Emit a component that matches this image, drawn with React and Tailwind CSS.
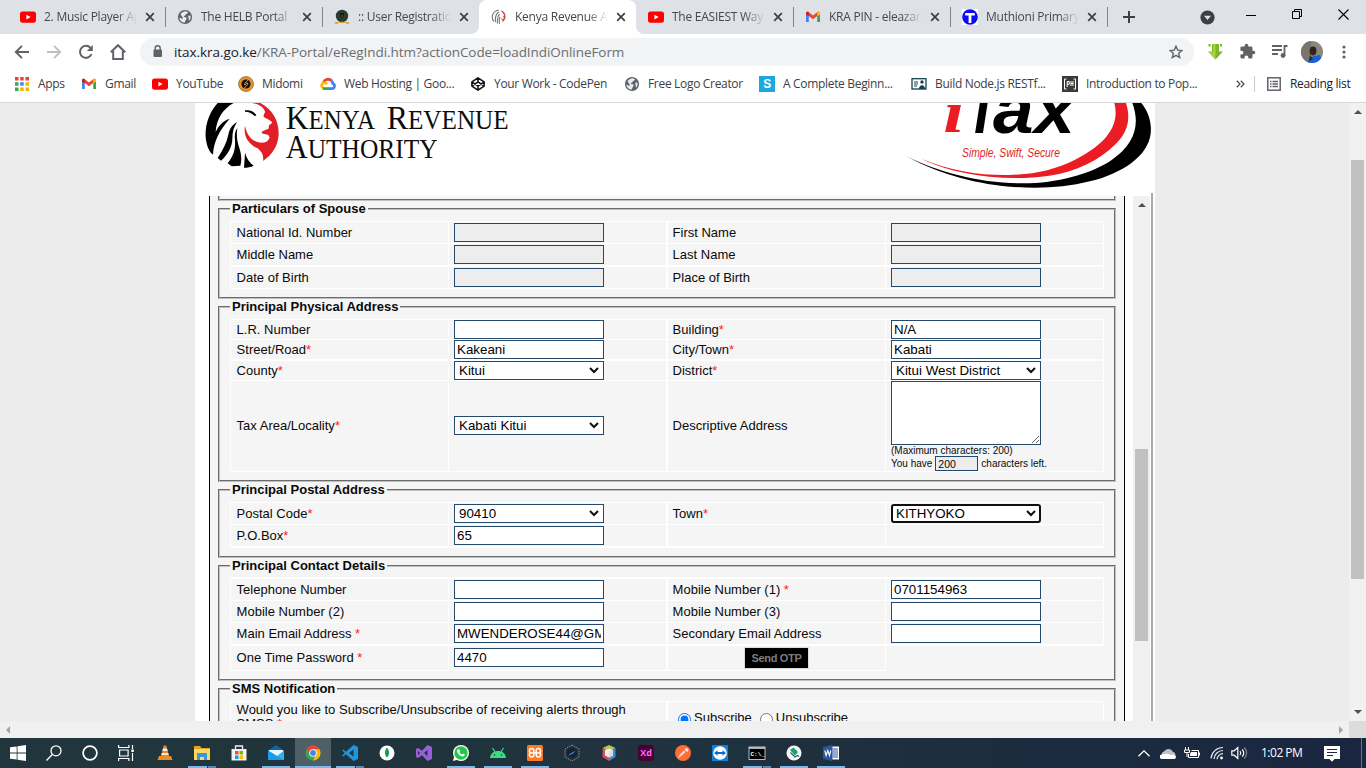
import React from "react";

const ui = "font-['Open_Sans','Noto_Sans',sans-serif]";

/* ---------- small icons ---------- */
const YouTube = () => (
  <svg width="16" height="16" viewBox="0 0 16 16">
    <rect x="0" y="2.5" width="16" height="11.2" rx="2.6" fill="#f00" />
    <path d="M6.4 5.7v4.8L10.6 8.1z" fill="#fff" />
  </svg>
);
const Gmail = () => (
  <svg width="16" height="16" viewBox="0 0 16 16">
    <path d="M1 4v9h2.8V6.5z" fill="#4285f4" />
    <path d="M15 4v9h-2.8V6.5z" fill="#34a853" />
    <path d="M1 4.3C1 2.9 2.6 2.4 3.8 3.2L8 6.4l4.2-3.2C13.4 2.4 15 2.9 15 4.3L12.2 7 8 10.2 3.8 7z" fill="#ea4335" />
    <path d="M12.2 3.2C13.4 2.4 15 2.9 15 4.3v1.1L12.2 7.5z" fill="#fbbc04" />
    <path d="M3.8 3.2C2.6 2.4 1 2.9 1 4.3v1.1l2.8 2.1z" fill="#c5221f" />
  </svg>
);
const Globe = () => (
  <svg width="16" height="16" viewBox="0 0 16 16">
    <circle cx="8" cy="8" r="7.1" fill="#5f6368" />
    <path d="M8.6 2.2 10.8 3c.3 1.3-.6 1.6-1.6 2-.9.4-.4 1.5-1.6 1.7C6.2 7 6.8 8.3 8.3 8.2c1.4-.1 1.5.7 1.3 1.6-.2.9-1 1-1.2 2-.2.9-.6 1.7-1.3 1.9C4.3 13.2 2.4 10.9 2.3 8.5l2.5 1.3c.9.3 1.3-.4.8-1.2L3.5 5.3C4.5 3.5 6.5 2.2 8.6 2.2zM12 6.6c.9-.3 1.4.1 1.6.7.2 1.5-.4 3.2-1.4 4.3-.7-.6-.3-1.6-.5-2.4-.2-.9-1-2 .3-2.6z" fill="#e8eaed" />
  </svg>
);
const Crest = () => (
  <svg width="16" height="16" viewBox="0 0 16 16">
    <circle cx="8" cy="7" r="6.2" fill="#2c3440" />
    <circle cx="8" cy="6.8" r="4.3" fill="#174b1f" />
    <path d="M6.2 4h3.5v3.5L8 9.5 6.200 7.5z" fill="#0c0c0c" />
    <path d="M7.300 5.500h1.500v3H7.300z" fill="#b3262a" />
    <path d="M.5 14.500c1-3 3-.5 7.500-2 4.500 1.500 6.500-1 7.500 2l-2.500.5-2-1.500-3 .8-3-.8-2 1.500z" fill="#d8a62a" />
  </svg>
);
const LionMini = () => (
  <svg width="16" height="16" viewBox="0 0 16 16" fill="none">
    <path d="M8 1.200A6.800 6.800 0 0 0 3 12.500M8 3C5 4.500 4 8 4.500 13M8.500 5C6.500 7 6 10 6.500 14.500M9 8c-1 2-1 4-.5 6.800" stroke="#777" strokeWidth="1.100" />
    <path d="M9.500 1.300c4.500 1 6 5.500 4.500 9l-2.500 3.200v-2l-2-2.200 2.500 1 1-1.500-1-1 1.200-1.500-2-3z" fill="#d8434a" />
  </svg>
);
const TIcon = () => (
  <svg width="16" height="16" viewBox="0 0 16 16">
    <rect width="16" height="16" fill="#fff" />
    <circle cx="8" cy="8" r="7.800" fill="#0b0bf5" />
    <path d="M3.200 4h9.600v2.600H9.400V14H6.600V6.600H3.200z" fill="#fff" />
  </svg>
);
const Close = () => (
  <svg width="10" height="10" viewBox="0 0 10 10" stroke="#3c4043" strokeWidth="1.700">
    <path d="M1.200 1.200l7.600 7.600M8.800 1.200L1.200 8.800" />
  </svg>
);

const tabs = [
  { Icon: YouTube, title: "2. Music Player App" },
  { Icon: Globe, title: "The HELB Portal", sep: true },
  { Icon: Crest, title: ":: User Registration", sep: true },
  { Icon: LionMini, title: "Kenya Revenue Aut", active: true },
  { Icon: YouTube, title: "The EASIEST Way to" },
  { Icon: Gmail, title: "KRA PIN - eleazarm", sep: true },
  { Icon: TIcon, title: "Muthioni Primary S", sep: true },
];

function Tab({ Icon, title, active, sep }) {
  return (
    <div className={"relative flex h-[34px] w-[157px] shrink-0 items-center " + (active ? "rounded-t-lg bg-white" : "")}>
      {sep && <span className="absolute top-[7px] left-0 h-[20px] w-px bg-[#80868b]" />}
      {active && (
        <>
          <svg className="absolute bottom-0 left-[-8px]" width="8" height="8" fill="#fff"><path d="M8 0v8H0A8 8 0 0 0 8 0z" /></svg>
          <svg className="absolute right-[-8px] bottom-0" width="8" height="8" fill="#fff"><path d="M0 0v8h8A8 8 0 0 1 0 0z" /></svg>
        </>
      )}
      <span className="ml-3 w-4"><Icon /></span>
      <span className="ml-2 w-[93px] overflow-hidden text-[12px] tracking-[-0.25px] whitespace-nowrap text-[#45494d] [mask-image:linear-gradient(to_right,black_78%,transparent)]">{title}</span>
      <span className="ml-[8px]"><Close /></span>
    </div>
  );
}

function TabStrip() {
  return (
    <div className="flex h-[34px] bg-[#dee1e6] pl-2">
      {tabs.map((t) => <Tab key={t.title} {...t} />)}
      <div className="relative flex w-[259px] items-center">
        <span className="absolute top-[7px] left-0 h-[20px] w-px bg-[#80868b]" />
        <svg className="ml-4" width="12" height="12" viewBox="0 0 12 12" stroke="#3c4043" strokeWidth="2"><path d="M6 0v12M0 6h12" /></svg>
        <svg className="ml-[65px]" width="15" height="15" viewBox="0 0 15 15"><circle cx="7.500" cy="7.500" r="7.100" fill="#3c4043" /><path d="M4 5.800h7L7.500 10z" fill="#dee1e6" /></svg>
        <svg className="mb-[5px] ml-[31px]" width="10" height="10" stroke="#000"><path d="M0 5.500h10" /></svg>
        <svg className="mb-[6px] ml-[36px]" width="10" height="10" fill="none" stroke="#000"><path d="M.5 2.500h7v7h-7zM2.500 2.500v-2h7v7h-2" /></svg>
        <svg className="mb-[6px] ml-[36px] shrink-0" width="11" height="11" stroke="#000" strokeWidth="1.100"><path d="M.5 .5l10 10M10.500 .5l-10 10" /></svg>
      </div>
    </div>
  );
}

function Toolbar() {
  return (
    <div className="flex h-[35px] items-center bg-white">
      <svg className="ml-[14px]" width="16" height="16" viewBox="0 0 16 16" fill="none" stroke="#5f6368" strokeWidth="1.900"><path d="M15 8H2M8 1.800L1.800 8 8 14.200" /></svg>
      <svg className="ml-4" width="16" height="16" viewBox="0 0 16 16" fill="none" stroke="#bdc1c6" strokeWidth="1.900"><path d="M1 8h13M8 1.800L14.200 8 8 14.200" /></svg>
      <svg className="ml-4" width="16" height="16" viewBox="0 0 16 16" fill="none" stroke="#5f6368" strokeWidth="2"><path d="M13.500 10.200A6 6 0 1 1 12.400 3.800" /><path d="M14.800 1v6H8.800z" fill="#5f6368" stroke="none" /></svg>
      <svg className="ml-[15px]" width="18" height="18" viewBox="0 0 18 18" fill="none" stroke="#5f6368" strokeWidth="2"><path d="M1.800 9.300L9 2.200l7.200 7.100M4.200 8v8h9.600V8" /></svg>
      <div className="ml-[13px] flex h-7 w-[1054px] items-center rounded-full bg-[#f1f3f4]">
        <svg className="ml-[13px]" width="10" height="13" viewBox="0 0 10 13"><rect x="0.500" y="4.500" width="8.500" height="7.500" rx="1" fill="#5f6368" /><path d="M2.200 5V3.200a2.500 2.500 0 0 1 5 0V5" fill="none" stroke="#5f6368" strokeWidth="1.400" /></svg>
        <span className="mt-[2px] ml-[11px] text-[13.500px] tracking-[-0.06px] whitespace-nowrap text-[#6a6e73]"><span className="text-[#202124]">itax.kra.go.ke</span>/KRA-Portal/eRegIndi.htm?actionCode=loadIndiOnlineForm</span>
        <svg className="mr-[11px] ml-auto" width="14" height="14" viewBox="0 0 14 14" fill="none" stroke="#5f6368" strokeWidth="1.400"><path d="M7 1.200l1.700 3.900 4.200.4-3.200 2.800 1 4.200L7 10.300l-3.700 2.200 1-4.200L1.100 5.500l4.200-.4z" /></svg>
      </div>
      <svg className="ml-[13px]" width="17" height="17" viewBox="0 0 17 17"><path d="M1.500 1h2v2.500h-2zM13 1h2v2.500h-2zM5 1h7v7.500h4L8.500 16.500 1 8.500h4z" fill="#7db52b" /><path d="M6 1h2.500v15L2 9h4z" fill="#a3d33c" /></svg>
      <svg className="ml-[15px]" width="17" height="17" viewBox="0 0 24 24" fill="#5f6368"><path d="M20.500 11H19V7a2 2 0 0 0-2-2h-4V3.500a2.500 2.500 0 0 0-5 0V5H4a2 2 0 0 0-2 2v3.800h1.500a2.700 2.700 0 0 1 0 5.400H2V20a2 2 0 0 0 2 2h3.800v-1.500a2.700 2.700 0 0 1 5.400 0V22H17a2 2 0 0 0 2-2v-4h1.500a2.500 2.500 0 0 0 0-5z" /></svg>
      <svg className="ml-[15px]" width="17" height="15" viewBox="0 0 17 15"><path d="M1 2h10M1 6h10M1 10h6" stroke="#5f6368" strokeWidth="1.800" /><path d="M13.500 12V2h3" stroke="#5f6368" strokeWidth="1.800" fill="none" /><circle cx="12" cy="11.500" r="2.400" fill="#5f6368" /></svg>
      <svg className="ml-[13px]" width="22" height="22" viewBox="0 0 22 22"><defs><clipPath id="av"><circle cx="11" cy="11" r="11" /></clipPath></defs><g clipPath="url(#av)"><rect width="22" height="22" fill="#8c887e" /><path d="M0 0h10v22H0z" fill="#77756d" /><ellipse cx="12" cy="10" rx="3.400" ry="4.400" fill="#33211c" /><path d="M7 22c0-4 2-6 6-7l6-1 3 8z" fill="#1763d6" /><path d="M9 14l3 4-4 2z" fill="#3a241d" /></g></svg>
      <svg className="ml-[19px]" width="4" height="14" fill="#5f6368"><circle cx="2" cy="2" r="1.600" /><circle cx="2" cy="7" r="1.600" /><circle cx="2" cy="12" r="1.600" /></svg>
    </div>
  );
}

const AppsIcon = () => (
  <svg width="14" height="14" viewBox="0 0 14 14">
    <path d="M0 0h3.500v3.500H0zM5.200 0h3.500v3.500H5.200zM10.500 0H14v3.500h-3.500z" fill="#ea4335" />
    <path d="M0 5.200h3.500v3.500H0zM0 10.500h3.500V14H0z" fill="#34a853" /><path d="M5.200 5.200h3.500v3.500H5.200z" fill="#4285f4" />
    <path d="M10.500 5.200H14v3.500h-3.500zM5.200 10.500h3.500V14H5.200zM10.500 10.500H14V14h-3.500z" fill="#f5b400" />
  </svg>
);
const Midomi = () => (
  <svg width="16" height="16" viewBox="0 0 16 16"><circle cx="8" cy="8" r="7.500" fill="#e8922a" stroke="#6b4a22" strokeWidth=".6" /><circle cx="8" cy="8" r="4.600" fill="#171310" /><path d="M9.800 4.200L6.600 7.500v1.400l3-2v1.600L6.400 12" stroke="#e8922a" strokeWidth="1" fill="none" /></svg>
);
const Cloud = () => (
  <svg width="16" height="16" viewBox="0 0 16 16" fill="none" strokeWidth="2.800"><path d="M3.600 6.500A4.700 4.700 0 0 1 11.500 4.800" stroke="#ea4335" /><path d="M11.300 4.500c1 .8 1.200 1.700 1.300 2.800a2.800 2.800 0 0 1 0 5.300H8" stroke="#4285f4" /><path d="M8.500 12.600H4.500l-2-.6" stroke="#34a853" /><path d="M3 12a2.800 2.800 0 0 1 1.500-5.200c1.200 0 2 .5 2.600 1.300" stroke="#fbbc04" /></svg>
);
const CodePen = () => (
  <svg width="14" height="14" viewBox="0 0 24 24" fill="none" stroke="#111" strokeWidth="2.600" strokeLinejoin="round"><path d="M12 1.500L22.500 8.500v7L12 22.500 1.500 15.500v-7zM12 1.500v7M12 22.500v-7M22.500 8.500L12 15.500 1.500 8.500M1.500 15.500L12 8.500l10.500 7" /></svg>
);
const SIcon = () => <span className="flex h-4 w-4 items-center justify-center bg-[#1ba8dc] font-['Liberation_Sans',sans-serif] text-[12px] font-bold text-white">S</span>;
const CardIcon = () => (
  <svg width="16" height="12" viewBox="0 0 16 12"><rect x="1" y=".7" width="14" height="10.300" fill="#fff" stroke="#17404f" strokeWidth="1.300" /><path d="M3 4h4M3 6h4M3 8h3" stroke="#17404f" /><circle cx="11" cy="4" r="1.700" fill="#17404f" /><path d="M8 11c0-5 6-5 6 0z" fill="#17404f" /></svg>
);
const PhIcon = () => (
  <svg width="16" height="16" viewBox="0 0 16 16"><rect width="16" height="16" fill="#3a3a3a" /><path d="M4.500 3H2.500v10h2M11.500 3h2v10h-2M5.200 11V5.500h2v2.800h-2M9 5v5M11 5v5M9 7.500h2" stroke="#fff" fill="none" /></svg>
);

const bookmarks = [
  { Icon: AppsIcon, text: "Apps", cls: "w-[66px]", gap: "ml-[9px]" },
  { Icon: Gmail, text: "Gmail", cls: "w-[71px]", gap: "ml-[8px]" },
  { Icon: YouTube, text: "YouTube", cls: "w-[86px]", gap: "ml-[8px]" },
  { Icon: Midomi, text: "Midomi", cls: "w-[82px]", gap: "ml-[8px]" },
  { Icon: Cloud, text: "Web Hosting | Goo...", cls: "w-[151px]", gap: "ml-[8px]" },
  { Icon: CodePen, text: "Your Work - CodePen", cls: "w-[153px]", gap: "ml-[9px]" },
  { Icon: Globe, text: "Free Logo Creator", cls: "w-[135px]", gap: "ml-[8px]" },
  { Icon: SIcon, text: "A Complete Beginn...", cls: "w-[152px]", gap: "ml-[8px]" },
  { Icon: CardIcon, text: "Build Node.js RESTf...", cls: "w-[151px]", gap: "ml-[8px]" },
  { Icon: PhIcon, text: "Introduction to Pop...", cls: "w-[172px]", gap: "ml-[8px]" },
];

function Bookmarks() {
  return (
    <div className="flex h-[34px] items-center border-b border-[#d5d7da] bg-white pb-1 pl-[15px] text-[12px] tracking-[-0.32px] text-[#3c4043]">
      {bookmarks.map(({ Icon, text, cls, gap }) => (
        <div key={text} className={"flex shrink-0 items-center whitespace-nowrap " + cls}>
          <Icon />
          <span className={"mt-px " + gap}>{text}</span>
        </div>
      ))}
      <svg className="ml-[2px]" width="9" height="8" fill="none" stroke="#4a4d51" strokeWidth="1.300"><path d="M.8 .8L4 4 .8 7.200M4.800 .8L8 4 4.800 7.200" /></svg>
      <span className="ml-[9px] h-4 w-px bg-[#c9ccd0]" />
      <svg className="ml-[12px]" width="14" height="14" viewBox="0 0 14 14" fill="none" stroke="#5f6368"><rect x=".8" y=".8" width="12.400" height="12.400" strokeWidth="1.500" /><path d="M3 4.500h1.500M5.500 4.500H11M3 7h1.500M5.500 7H11M3 9.500h1.500M5.500 9.500H11" strokeWidth="1.300" /></svg>
      <span className="mt-px ml-[9px] whitespace-nowrap text-[#202124]">Reading list</span>
    </div>
  );
}

/* ---------- site header ---------- */
function KraLogo() {
  return (
    <svg width="330" height="93" viewBox="0 9 990 279">
      <path d="M68 9C38 42 28 84 33 120c4 24 12 38 21 44 2-38 18-72 50-108-22 8-34 22-42 40 2-38 22-70 54-87z" fill="#000" />
      <path d="M126 66c-16 10-23 22-26 38-5 24-17 46-32 70l10 8c22-20 34-44 34-66 0-20 4-34 14-50z" fill="#000" />
      <path d="M127 84c-8 12-8 22-7 36 2 26-4 48-22 70l12 9 26-2c6-20 2-38-4-56-6-20-8-34-5-57z" fill="#000" />
      <path d="M150 158c4 16 14 30 26 39-9 4-19 6-29 6z" fill="#000" />
      <path d="M150 31c14-2 26 2 34 14l-4 4c-8-9-18-14-30-14z" fill="#000" />
      <path d="M172 9h24c36 18 56 54 55 94-2 36-20 62-47 80 3-18-4-28-16-38-24-10-44-32-38-68 5 26 18 44 40 50 14 4 28 0 34-14l-4-8c-6-4-18-2-20-7 2-8 12-7 20-12 4-4-2-6 4-12l8-6c-6-10-20-12-26-18-2-10 8-10 2-20-6-12-20-18-36-21z" fill="#e21f26" />
      <g fill="#0d0d0d" className="font-['Liberation_Serif',serif]">
        <text x="272" y="88" textLength="268" lengthAdjust="spacingAndGlyphs" fontSize="82"><tspan fontSize="104">K</tspan>ENYA</text>
        <text x="575" y="88" textLength="366" lengthAdjust="spacingAndGlyphs" fontSize="82"><tspan fontSize="104">R</tspan>EVENUE</text>
        <text x="272" y="174" textLength="456" lengthAdjust="spacingAndGlyphs" fontSize="82"><tspan fontSize="98">A</tspan>UTHORITY</text>
      </g>
    </svg>
  );
}
function ITaxLogo() {
  return (
    <svg width="265" height="93" viewBox="0 9 795 279">
      <path d="M48 168C150 218 270 250 400 250c100 0 200-28 262-68C738 132 750 70 727 9h27c20 24 32 58 28 92-8 66-82 118-182 143-80 20-160 22-240 16C240 250 130 214 48 168z" fill="#000" />
      <path d="M93 176c90 36 170 50 262 49 80-2 140-16 200-46 80-40 138-96 118-170h35c14 44 8 84-30 122-50 50-120 84-200 96-60 9-120 9-180 3C220 221 150 204 93 176z" fill="#ec1c24" />
      <g className="font-['Liberation_Sans',sans-serif]" fontWeight="bold" fontStyle="italic">
        <text x="160" y="97" fontSize="178" className="font-['Liberation_Serif',serif]" fill="#ec1c24" textLength="62" lengthAdjust="spacingAndGlyphs">i</text>
        <g fill="#000" fontSize="205">
          <text x="226" y="98" textLength="100" lengthAdjust="spacingAndGlyphs">T</text>
          <text x="309" y="98" textLength="122" lengthAdjust="spacingAndGlyphs">a</text>
          <text x="433" y="98" textLength="122" lengthAdjust="spacingAndGlyphs">x</text>
        </g>
      </g>
      <text x="216" y="170" fontSize="38" fontStyle="italic" className="font-['Liberation_Sans',sans-serif]" fill="#d81f2a" textLength="294" lengthAdjust="spacingAndGlyphs">Simple, Swift, Secure</text>
    </svg>
  );
}

/* ---------- form ---------- */
const Star = () => <span className="text-[#f22]">*</span>;

function Field({ value = "", disabled }) {
  return <input readOnly defaultValue={value} className={"block h-[19px] w-[150px] shrink-0 border border-[#24496a] px-[2px] text-[13.333px] leading-[17px] text-black outline-none " + (disabled ? "bg-[#ededed]" : "bg-white")} />;
}
function Choice({ value, focused }) {
  return (
    <div className={"relative h-[19px] w-[150px] shrink-0 bg-white " + (focused ? "rounded-[3px] border-2 border-[#101010]" : "border border-[#24496a]")}>
      <select className={"block h-full w-full appearance-none bg-transparent text-[13.333px] leading-[15px] text-black outline-none " + (focused ? "px-[3px]" : "px-[4px]")}>
        <option>{value}</option>
      </select>
      <svg className={"pointer-events-none absolute " + (focused ? "top-[4px] right-[3px]" : "top-[5px] right-[4px]")} width="10" height="7" fill="none" stroke="#101010" strokeWidth="2"><path d="M1 1l4 4 4-4" /></svg>
    </div>
  );
}
const L = "w-[218px] border-l border-white pl-[5px]";
const R = "w-[219px] border-l-2 border-white pl-[4px]";
const E = "w-[219px] border-x border-white pl-[5px]";

function Row({ h, top = "border-t", left, leftStar, a, right, rightStar, b, label = "ml-[0.6px]" }) {
  const c = "flex shrink-0 items-center " + top + " ";
  return (
    <div className={"flex " + h}>
      <div className={c + L}><span className={label}>{left}{leftStar && <Star />}</span></div>
      <div className={c + L}>{a}</div>
      <div className={c + R}><span className={label}>{right}{rightStar && <Star />}</span></div>
      <div className={c + E}>{b}</div>
    </div>
  );
}
function Section({ title, h, pt = "pt-[11px]", children }) {
  return (
    <div className={"relative mb-[7px] ml-2 w-[898px] shrink-0 border-2 border-[#c0c0c0] pl-[10px] [border-style:groove] " + h + " " + pt}>
      <span className="absolute top-[-9px] left-[10px] bg-[#f5f5f5] px-[2px] text-[13px] leading-[15px] font-bold whitespace-nowrap">{title}</span>
      {children}
    </div>
  );
}

function Form() {
  return (
    <div className="flex w-[916px] flex-col overflow-hidden border-x border-black bg-[#f5f5f5] text-[13px] leading-[15px] text-[#0a0a0a]">
      <div className="mb-[7px] ml-2 h-[5px] w-[898px] shrink-0 border-2 border-[#c0c0c0] [border-style:groove] [border-top:0]" />
      <Section title="Particulars of Spouse" h="h-[91px]">
        <Row h="h-[22px]" left="National Id. Number" a={<Field disabled />} right="First Name" b={<Field disabled />} />
        <Row h="h-[22px]" left="Middle Name" a={<Field disabled />} right="Last Name" b={<Field disabled />} />
        <Row h="h-[23px]" top="border-t-2" left="Date of Birth" a={<Field disabled />} right="Place of Birth" b={<Field disabled />} />
        <div className="h-px w-[874px] bg-white" />
      </Section>
      <Section title="Principal Physical Address" h="h-[176px]">
        <Row h="h-[20px]" left="L.R. Number" a={<Field />} right="Building" rightStar b={<Field value="N/A" />} />
        <Row h="h-[20px]" left="Street/Road" leftStar a={<Field value="Kakeani" />} right="City/Town" rightStar b={<Field value="Kabati" />} />
        <Row h="h-[21px]" top="border-t-2" left="County" leftStar a={<Choice value="Kitui" />} right="District" rightStar b={<Choice value="Kitui West District" />} />
        <Row
          h="h-[91px]" left="Tax Area/Locality" leftStar label="ml-[0.6px] pb-[2px]"
          a={<div className="pb-px"><Choice value="Kabati Kitui" /></div>}
          right="Descriptive Address"
          b={
            <div className="h-[90px] text-[10px] leading-[11px]">
              <textarea readOnly className="block h-[64px] w-[150px] resize border border-[#24496a] bg-white outline-none" />
              <div className="whitespace-nowrap">(Maximum characters: 200)</div>
              <div className="flex items-center whitespace-nowrap">
                <span className="-mt-px">You have</span>
                <input readOnly defaultValue="200" className="mr-[3px] ml-[3px] h-[15px] w-[43px] border border-[#24496a] bg-[#ededed] px-[2px] text-[10.500px] outline-none" />
                <span className="-mt-px">characters left.</span>
              </div>
            </div>
          }
        />
        <div className="h-px w-[874px] bg-white" />
      </Section>
      <Section title="Principal Postal Address" h="h-[69px]">
        <Row h="h-[22px]" left="Postal Code" leftStar a={<Choice value="90410" />} right="Town" rightStar b={<Choice value="KITHYOKO" focused />} />
        <Row h="h-[22px]" left="P.O.Box" leftStar a={<Field value="65" />} />
        <div className="h-[2px] w-[874px] bg-white" />
      </Section>
      <Section title="Principal Contact Details" h="h-[116px]" pt="pt-[10px]">
        <Row h="h-[23px]" top="border-t-2" left="Telephone Number" a={<Field />} right="Mobile Number (1) " rightStar b={<Field value="0701154963" />} />
        <Row h="h-[22px]" left="Mobile Number (2)" a={<Field />} right="Mobile Number (3)" b={<Field />} />
        <Row h="h-[22px]" left="Main Email Address " leftStar a={<Field value="MWENDEROSE44@GMAIL.COM" />} right="Secondary Email Address" b={<Field />} />
        <div className="flex h-[27px]">
          <div className={"flex items-center border-t-2 border-b pb-px " + L}><span className="ml-[0.6px]">One Time Password <Star /></span></div>
          <div className={"border-t-2 border-b pt-[2px] " + L}><Field value="4470" /></div>
          <div className="flex w-[220px] justify-center border-x border-t-2 border-b border-l-2 border-white pt-px">
            <button className="h-[22px] w-[65px] border border-[#dcdcdc] bg-black text-[11px] font-bold tracking-[-0.3px] whitespace-nowrap text-[#7d7d7d]">Send OTP</button>
          </div>
          <div className="h-[2px] w-[218px] bg-white" />
        </div>
      </Section>
      <Section title="SMS Notification" h="h-[60px]">
        <div className="flex h-[40px]">
          <div className="w-[436px] border-t border-l border-white pt-px pr-4 pl-[5.6px] leading-[14px]">Would you like to Subscribe/Unsubscribe of receiving alerts through SMSS <Star /></div>
          <div className="flex w-[438px] items-center border-x border-t border-l-2 border-white pb-[8px] pl-[10px]">
            <input type="radio" name="sms" defaultChecked className="mt-[3px] h-[13px] w-[13px]" />
            <span className="ml-[3px]">Subscribe</span>
            <input type="radio" name="sms" className="mt-[3px] ml-[8px] h-[13px] w-[13px]" />
            <span className="ml-[3px]">Unsubscribe</span>
          </div>
        </div>
      </Section>
    </div>
  );
}

const Arrow = ({ d, fill = "#505050" }) => <svg className="block" width="8" height="8" viewBox="0 0 8 8" fill={fill}><path d={d} /></svg>;

function Page() {
  return (
    <div className="flex h-[618px] bg-[#ececec] font-['Liberation_Sans',Arial,sans-serif]">
      <div className="ml-[195px] flex w-[960px] flex-col bg-white">
        <div className="relative flex h-[93px] shrink-0 justify-between">
          <KraLogo />
          <ITaxLogo />
          <span className="absolute right-[2px] bottom-0 h-[3px] w-[2px] bg-[#a9a9a9]" />
        </div>
        <div className="flex h-[525px] pl-[14px]">
          <Form />
          <div className="ml-2 flex w-[17px] flex-col items-center bg-[#f0f0f0] pt-[5px]">
            <Arrow d="M0 6L4 2l4 4z" />
            <div className="mt-[240px] h-[192px] w-[13px] bg-[#c1c1c1]" />
          </div>
          <div className="ml-px w-[2px] bg-[#a9a9a9]" />
        </div>
      </div>
      <div className="ml-auto flex w-[17px] flex-col items-center bg-[#f1f1f1] pt-[5px]">
        <Arrow d="M0 6L4 2l4 4z" />
        <div className="mt-[44px] h-[419px] w-[13px] bg-[#c1c1c1]" />
        <div className="mt-[129px]"><Arrow d="M0 2l4 4 4-4z" /></div>
      </div>
    </div>
  );
}

/* ---------- taskbar ---------- */
const S = ({ children }) => <svg width="18" height="18" viewBox="0 0 18 18">{children}</svg>;
const bar = [
  { n: "vlc", i: <S><path d="M7.800 1.500h2.400L13 12H5z" fill="#f58220" /><path d="M7 4.500h4l.7 2.500H6.300zM5.800 9h6.400l.6 2H5.200z" fill="#eee" /><path d="M3 12h12l1.500 4h-15z" fill="#f28a1e" /></S> },
  { n: "files", u: 2, i: <S><path d="M1 2h6l1.500 2H17v12H1z" fill="#e3a520" /><path d="M1 5h16v11H1z" fill="#fbd765" /><path d="M4 9h10v7h-3v-3H7v3H4z" fill="#3d94dc" /></S> },
  { n: "store", i: <S><path d="M5.500 5V2h7v3" stroke="#eee" strokeWidth="1.300" fill="none" /><path d="M1.500 5h15v11.500h-15z" fill="#f2f2f2" /><path d="M5 7h3.500v3.500H5z" fill="#f25022" /><path d="M9.500 7H13v3.500H9.500z" fill="#7fba00" /><path d="M5 11.500h3.500V15H5z" fill="#00a4ef" /><path d="M9.500 11.500H13V15H9.500z" fill="#ffb900" /></S> },
  { n: "mail", u: 1, i: <S><path d="M1 6.500L9 1l8 5.500V16H1z" fill="#0a64ad" /><path d="M2 6h14v7H2z" fill="#e8f4fb" /><path d="M1 6.500L10 12l7-5.500V16H1z" fill="#35b1ee" /><path d="M1 6.500V16h16L9 11.500z" fill="#1c9be6" /></S> },
  { n: "chrome", u: 3, i: <S><circle cx="9" cy="9" r="7.500" fill="#34a853" /><path d="M2.500 5.300A7.500 7.500 0 0 1 15.500 5.300H9z" fill="#ea4335" /><path d="M15.500 5.300A7.500 7.500 0 0 1 9 16.500l3.500-7L9 5.300z" fill="#fbbc04" /><path d="M2.500 5.300L6 11l3-5.700z" fill="#ea4335" /><circle cx="9" cy="9" r="3.800" fill="#fff" /><circle cx="9" cy="9" r="2.900" fill="#4285f4" /></S> },
  { n: "code", u: 2, i: <S><path d="M12.500 1L17 3v12l-4.500 2L5 10.200 2.200 12.500 1 11.700 3.800 9 1 6.300l1.200-.8L5 7.800zM12.500 5.500L8 9l4.500 3.500z" fill="#2196dc" fillRule="evenodd" /></S> },
  { n: "mongo", i: <S><circle cx="9" cy="9" r="7.500" fill="#fff" /><path d="M9 3.500c3 3.500 2.500 7.500 0 10-2.500-2.500-3-6.500 0-10z" fill="#1d9a4d" /></S> },
  { n: "vs", i: <S><path d="M12.500 1L17 3v12l-4.500 2L7 11.200 3 14l-2-1V5l2-1 4 2.800zM12.500 6L9 9l3.500 3zM3 7v4l2-2z" fill="#9a5fd6" fillRule="evenodd" /></S> },
  { n: "whatsapp", u: 1, i: <S><circle cx="9" cy="9" r="8" fill="#fff" /><path d="M1 17l1.200-4.500 3.500 3.300z" fill="#fff" /><circle cx="9" cy="9" r="6.700" fill="#25c64c" /><path d="M6 5.200l1.500.3.600 1.700-.7 1c.6 1.200 1.500 1.900 2.600 2.400l1-1 1.800.9c0 1.300-.9 2-2 2C8 12.300 5 9 5 6.700z" fill="#fff" /></S> },
  { n: "android", u: 1, i: <S><path d="M1 14c.5-9.500 15.500-9.500 16 0z" fill="#3ddc84" /><path d="M3.500 4l2.500 4M14.500 4L12 8" stroke="#3ddc84" strokeWidth="1.200" /><circle cx="5.500" cy="11" r=".8" fill="#20333b" /><circle cx="12.500" cy="11" r=".8" fill="#20333b" /></S> },
  { n: "xampp", u: 1, i: <S><rect x="1" y="1" width="16" height="16" rx="1.500" fill="#fb7a24" /><path d="M7.800 9H5.500a2.200 2.200 0 1 1 2.300-2.200V9h2.400V6.800A2.200 2.200 0 1 1 12.500 9h-2.300M7.800 9v1.800a2.200 2.200 0 1 1-2.900-2M10.200 9v1.800a2.200 2.200 0 1 0 2.900-2" stroke="#fff" strokeWidth="1.500" fill="none" /></S> },
  { n: "compass", i: <S><path d="M9 1l7 4v8l-7 4-7-4V5z" fill="#22303a" stroke="#8b959b" strokeDasharray="1.500 1" /><circle cx="9" cy="9" r="5" fill="#16222e" /><path d="M5 12l3-3L13 6.500l-3 3z" fill="#2f87e8" /></S> },
  { n: "cube", i: <S><path d="M9 1l6.500 3L9 7.500 2.500 4z" fill="#b4c850" /><path d="M2.500 4L9 7v10l-6.500-4z" fill="#d94b63" /><path d="M15.500 4L9 7v10l6.500-4z" fill="#3a8ed0" /><path d="M5 6l4-1.500L13 6v5.500L9 13.500 5 11.500z" fill="#f5f0ea" /><path d="M9 7.500v6l4-2V6z" fill="#d8dde2" /></S> },
  { n: "xd", i: <span className="flex h-4 w-4 items-center justify-center rounded-[3px] bg-[#470137] font-['Open_Sans',sans-serif] text-[9px] font-bold text-[#ff61f6]">Xd</span> },
  { n: "postman", i: <S><circle cx="9" cy="9" r="8" fill="#ff6c37" /><path d="M4 14l1.500-3L10 6.500l1.500 1.500L6 13zM10.500 5.500a2 2 0 1 1 2.500 2.500z" fill="#fbe2d8" /></S> },
  { n: "teamviewer", i: <S><rect x="1" y="1" width="16" height="16" rx="1" fill="#0f7fe0" /><circle cx="9" cy="9" r="6.800" fill="#fff" /><path d="M3 9l3.500-2.800v1.900h5V6.200L15 9l-3.500 2.800V9.900h-5v1.900z" fill="#0f6cc4" /></S> },
  { n: "cmd", u: 2, i: <S><rect x="1" y="3" width="16" height="12.500" fill="#000" stroke="#b9bec2" /><path d="M1 4h16" stroke="#d5d8da" strokeWidth="1.600" /><text x="2.500" y="12" fontSize="6" fill="#fff" fontWeight="bold" className="font-['Liberation_Mono',monospace]">C:\_</text></S> },
  { n: "studio", u: 1, i: <S><circle cx="9" cy="9" r="7.500" fill="#f4f6f5" /><path d="M5 6l3.500-2.500L13 8l-3 3.500z" fill="#1f9d6b" /><path d="M5.500 8.500L10 13l2.500-1.500 1.500 1" fill="none" stroke="#2a6274" strokeWidth="1.200" /></S> },
  { n: "word", u: 1, i: <S><path d="M8 2.500h9v13H8z" fill="#fff" /><path d="M10.500 5H16M10.500 7H16M10.500 9H16M10.500 11H16M10.500 13H16" stroke="#2b579a" /><path d="M1 3l9.500-2v16L1 15z" fill="#2b579a" /><path d="M2.800 6.500l1.300 5 1.700-5 1.700 5 1.300-5" stroke="#fff" strokeWidth="1.100" fill="none" /></S> },
];

function Taskbar() {
  return (
    <div className="flex h-[30px] bg-gradient-to-r from-[#21363c] via-[#1f323e] to-[#1a2640]">
      <div className="flex w-[147px] items-center gap-[20px] pl-[10px]">
        <svg width="16" height="16" viewBox="0 0 16 16" fill="#fff"><path d="M0 2.300l6.700-.9v6.200H0zM7.500 1.300L16 0v7.600H7.500zM0 8.400h6.700v6.200L0 13.700zM7.500 8.400H16V16l-8.500-1.200z" /></svg>
        <svg width="16" height="16" viewBox="0 0 16 16" fill="none" stroke="#fff" strokeWidth="1.300"><circle cx="10" cy="5.800" r="5" /><path d="M6.300 9.500L.5 15.500" /></svg>
        <svg width="16" height="16" viewBox="0 0 16 16" fill="none" stroke="#fff" strokeWidth="1.700"><circle cx="8" cy="8" r="6.900" /></svg>
        <svg width="17" height="16" viewBox="0 0 17 16" fill="none" stroke="#fff" strokeWidth="1.200"><path d="M.6 0v2.500h10.300V0M.6 16v-2.500h10.300V16M1.600 5h8.500v6H1.600zM14.500 0v4M14.500 8v8" /><path d="M13.300 4.500h2.500V7h-2.500z" fill="#fff" stroke="none" /></svg>
      </div>
      <div className="flex gap-px">
        {bar.map(({ n, i, u }) => (
          <div key={n} className={"flex w-9 flex-col items-center " + (u === 3 ? "bg-[#4e5f66]" : "")}>
            <div className="flex h-7 w-[18px] items-center justify-center pt-[2px]">{i}</div>
            {u === 1 && <div className="h-[2px] w-7 bg-[#76b9ed]" />}
            {u === 3 && <div className="h-[2px] w-9 bg-[#76b9ed]" />}
            {u === 2 && <div className="flex h-[2px] w-7"><span className="w-[19px] bg-[#76b9ed]" /><span className="ml-px w-2 bg-[#5688ad]" /></div>}
          </div>
        ))}
      </div>
      <div className="ml-auto flex w-[228px] items-center">
        <svg width="12" height="7" fill="none" stroke="#fff" strokeWidth="1.300"><path d="M.5 6.300L6 .9l5.500 5.400" /></svg>
        <svg className="ml-[10px]" width="17" height="11" viewBox="0 0 17 11"><path d="M3 9a3 3 0 0 1 1-5.500A5 5 0 0 1 13 4c3 .3 3 4 1 5z" fill="#b9c0c8" /><path d="M2 11a2 2 0 0 1 0-4.500C6 5 9 6 11 7c2-.8 5-.4 5 2 0 1.200-1 2-2 2z" fill="#fff" /></svg>
        <svg className="ml-[7px]" width="16" height="13" viewBox="0 0 16 13" fill="none" stroke="#fff"><path d="M4.500 7v3.500h10v-7h-7M15.500 5.500v3M1.500 0v3M4.500 0v3M.5 3h5v2.500H.5zM3 6v4" /><path d="M7 5h6v4H6V7z" fill="#fff" stroke="none" /></svg>
        <svg className="ml-[10px]" width="14" height="14" viewBox="0 0 14 14" fill="none" stroke="#e8ebee" strokeWidth="1.200"><path d="M1 12.500A12 12 0 0 1 13 1.500M4 13A9 9 0 0 1 13 4.500M7 13.300a6 6 0 0 1 6-5.600" /><circle cx="11.500" cy="12" r="1.400" fill="#fff" stroke="none" /></svg>
        <svg className="ml-[7px]" width="17" height="14" viewBox="0 0 17 14" fill="none" stroke="#fff" strokeWidth="1.200"><path d="M.8 4.800h2.400L6.800 1.500v11L3.200 9.200H.8zM9 5c1 1.300 1 2.700 0 4M11.200 3.300c1.900 2.300 1.900 5.100 0 7.400" /><path d="M13.300 1.500c2.900 3.500 2.900 7.500 0 11" stroke="#7f8a96" /></svg>
        <span className="ml-[13px] text-[12px] tracking-[-0.5px] whitespace-nowrap text-white">1:02 PM</span>
        <svg className="mt-[2px] ml-[22px]" width="16" height="16" viewBox="0 0 16 16"><path d="M0 0h16v13h-5.500L8 15.800 5.500 13H0z" fill="#fff" /><path d="M3 3.500h10M3 6.500h10M3 9.500h6" stroke="#1b2a40" strokeWidth="1.200" /></svg>
        <span className="mr-1 ml-auto h-[30px] w-px bg-[#6d7686]" />
      </div>
    </div>
  );
}

export default function App() {
  return (
    <div className={"flex h-[768px] w-[1366px] flex-col overflow-hidden bg-white " + ui}>
      <TabStrip />
      <Toolbar />
      <Bookmarks />
      <Page />
      <div className="flex h-[17px] items-center bg-[#f0f0f0] pl-[4px]">
        <Arrow d="M6 0L2 4l4 4z" fill="#a3a3a3" />
        <div className="mr-1 ml-auto"><Arrow d="M2 0l4 4-4 4z" fill="#a3a3a3" /></div>
        <div className="h-[17px] w-[17px] bg-[#dcdcdc]" />
      </div>
      <Taskbar />
    </div>
  );
}
